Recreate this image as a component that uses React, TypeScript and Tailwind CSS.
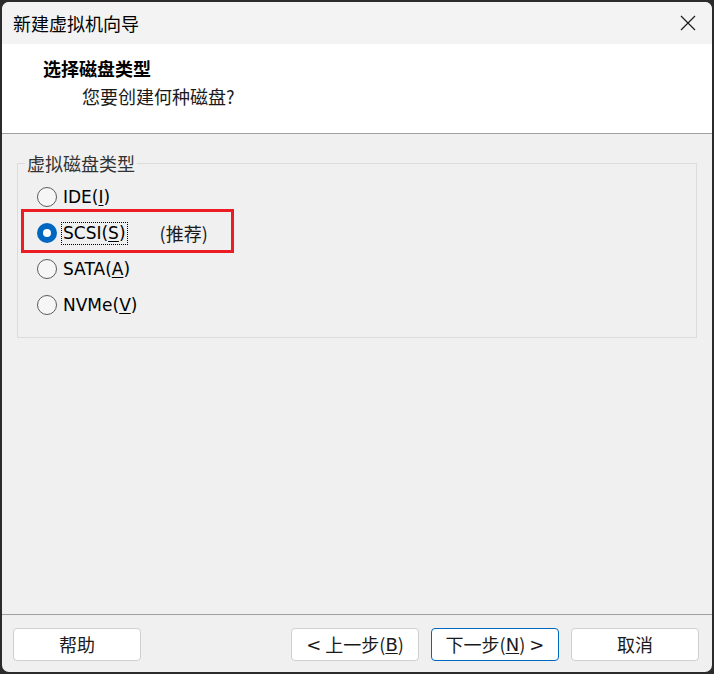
import React from 'react';

const cjk = { fontFamily: '"Noto Sans CJK SC", "Noto Sans", sans-serif' };
const latin = { fontFamily: '"DejaVu Sans", "Noto Sans CJK SC", sans-serif' };

function Radio({ checked }: { checked?: boolean }) {
  if (checked) {
    return (
      <span className="flex h-[20px] w-[20px] items-center justify-center rounded-full bg-[#0067c0]">
        <span className="h-[8px] w-[8px] rounded-full bg-white" />
      </span>
    );
  }
  return <span className="block h-[20px] w-[20px] rounded-full border border-[#5c5c5c] bg-[#f6f6f6]" />;
}

function Option({ label, hotkey, checked, extra }: { label: string; hotkey: string; checked?: boolean; extra?: string }) {
  return (
    <div className="relative flex h-[36px] items-center pl-[19px]">
      <Radio checked={checked} />
      <span
        className={`ml-[5px] px-[1px] text-[17px] leading-[21px] text-black ${checked ? 'outline outline-1 outline-dotted outline-black' : ''}`}
        style={latin}
      >
        {label}(<span className="underline underline-offset-2">{hotkey}</span>)
      </span>
      {extra && (
        <span className="ml-[33px] text-[18px] text-[#1a1a1a]" style={cjk}>
          {extra}
        </span>
      )}
      {checked && (
        <div className="pointer-events-none absolute left-[3px] top-[-6px] h-[44px] w-[213px] border-[3px] border-[#ec1c24]" />
      )}
    </div>
  );
}

function Btn({ children, primary }: { children: React.ReactNode; primary?: boolean }) {
  return (
    <button
      className={`flex h-[33px] w-[128px] items-center justify-center rounded-[4px] border bg-white text-[18px] text-[#1a1a1a] ${
        primary ? 'border-[#0067c0]' : 'border-[#d0d0d0]'
      }`}
      style={cjk}
    >
      {children}
    </button>
  );
}

export default function App() {
  return (
    <div className="h-[674px] w-[714px] bg-[#2b2b2b] p-[2px]">
      <div className="flex h-full w-full flex-col overflow-hidden rounded-[7px] bg-[#f0f0f0]">
        {/* Title bar */}
        <div className="flex h-[42px] shrink-0 items-center justify-between bg-[#f3f3f3] pl-[11px] pr-[15px]">
          <span className="text-[18px] text-black" style={cjk}>新建虚拟机向导</span>
          <svg width="18" height="18" viewBox="0 0 18 18" fill="none" stroke="#1a1a1a" strokeWidth="1.2">
            <path d="M2 2L16 16M16 2L2 16" />
          </svg>
        </div>

        {/* Header */}
        <div className="flex h-[90px] shrink-0 flex-col border-b border-[#a0a0a0] bg-white pl-[41px] pt-[11px]">
          <span className="text-[18px] font-bold leading-[26px] text-black" style={cjk}>选择磁盘类型</span>
          <span className="ml-[39px] mt-[2px] text-[18px] leading-[26px] text-[#1a1a1a]" style={cjk}>您要创建何种磁盘?</span>
        </div>

        {/* Body */}
        <div className="flex-1 px-[15px] pt-[19px]">
          <fieldset className="h-[185px] w-[680px] border border-[#dcdcdc] px-0 pb-0">
            <legend className="ml-[7px] px-[2px] text-[18px] leading-[20px] text-[#333]" style={cjk}>
              虚拟磁盘类型
            </legend>
            <div className="flex flex-col pt-[6px]">
              <Option label="IDE" hotkey="I" />
              <Option label="SCSI" hotkey="S" checked extra="(推荐)" />
              <Option label="SATA" hotkey="A" />
              <Option label="NVMe" hotkey="V" />
            </div>
          </fieldset>
        </div>

        {/* Footer */}
        <div className="flex shrink-0 items-center justify-between border-t border-[#a0a0a0] pb-[11px] pl-[11px] pr-[13px] pt-[13px]">
          <Btn>帮助</Btn>
          <div className="flex gap-[12px]">
            <Btn>
              <span style={latin}>&lt;</span>&nbsp;上一步(<span className="underline underline-offset-2" style={latin}>B</span>)
            </Btn>
            <Btn primary>
              下一步(<span className="underline underline-offset-2" style={latin}>N</span>)&nbsp;<span style={latin}>&gt;</span>
            </Btn>
            <Btn>取消</Btn>
          </div>
        </div>
      </div>
    </div>
  );
}
